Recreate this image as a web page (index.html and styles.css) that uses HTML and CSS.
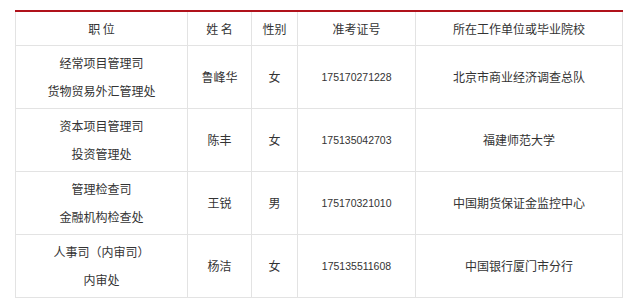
FILE: index.html
```html
<!DOCTYPE html>
<html lang="zh-CN">
<head>
    <meta charset="UTF-8">
    <title>录用人员名单</title>
    <link rel="stylesheet" href="styles.css">
</head>
<body>
    <div class="list">
        <table class="roster">
            <colgroup>
                <col class="c-post">
                <col class="c-name">
                <col class="c-sex">
                <col class="c-num">
                <col class="c-unit">
            </colgroup>
            <tr class="head">
                <th>职&nbsp;位</th>
                <th>姓&nbsp;名</th>
                <th>性别</th>
                <th>准考证号</th>
                <th>所在工作单位或毕业院校</th>
            </tr>
            <tr>
                <td class="post">经常项目管理司<br>货物贸易外汇管理处</td>
                <td>鲁峰华</td>
                <td>女</td>
                <td class="num">175170271228</td>
                <td>北京市商业经济调查总队</td>
            </tr>
            <tr>
                <td class="post">资本项目管理司<br>投资管理处</td>
                <td>陈丰</td>
                <td>女</td>
                <td class="num">175135042703</td>
                <td>福建师范大学</td>
            </tr>
            <tr>
                <td class="post">管理检查司<br>金融机构检查处</td>
                <td>王锐</td>
                <td>男</td>
                <td class="num">175170321010</td>
                <td>中国期货保证金监控中心</td>
            </tr>
            <tr>
                <td class="post">人事司（内审司）<br>内审处</td>
                <td>杨洁</td>
                <td>女</td>
                <td class="num">175135511608</td>
                <td>中国银行厦门市分行</td>
            </tr>
        </table>
    </div>
</body>
</html>
```

FILE: styles.css
```css
body {
    margin: 0;
    padding: 10px 8px 0 15px;
    background: #fff;
    font-family: "Noto Sans CJK SC", "Liberation Sans", sans-serif;
    font-size: 12px;
    color: #333;
}
.list {
    width: 608px;
    border-top: 2px solid #b0121b;
}
.roster {
    width: 607px;
    border-collapse: collapse;
    table-layout: fixed;
}
.c-post { width: 172px; }
.c-name { width: 64px; }
.c-sex { width: 46px; }
.c-num { width: 118px; }
.c-unit { width: 207px; }
.roster th,
.roster td {
    border: 1px solid #e3e3e3;
    border-top: 0;
    padding: 0;
    text-align: center;
    vertical-align: middle;
    font-weight: normal;
}
.roster th {
    height: 33px;
}
.roster td {
    height: 62px;
    line-height: 28px;
}
.roster .num {
    font-family: "Liberation Sans", sans-serif;
    font-size: 10.5px;
}
```
